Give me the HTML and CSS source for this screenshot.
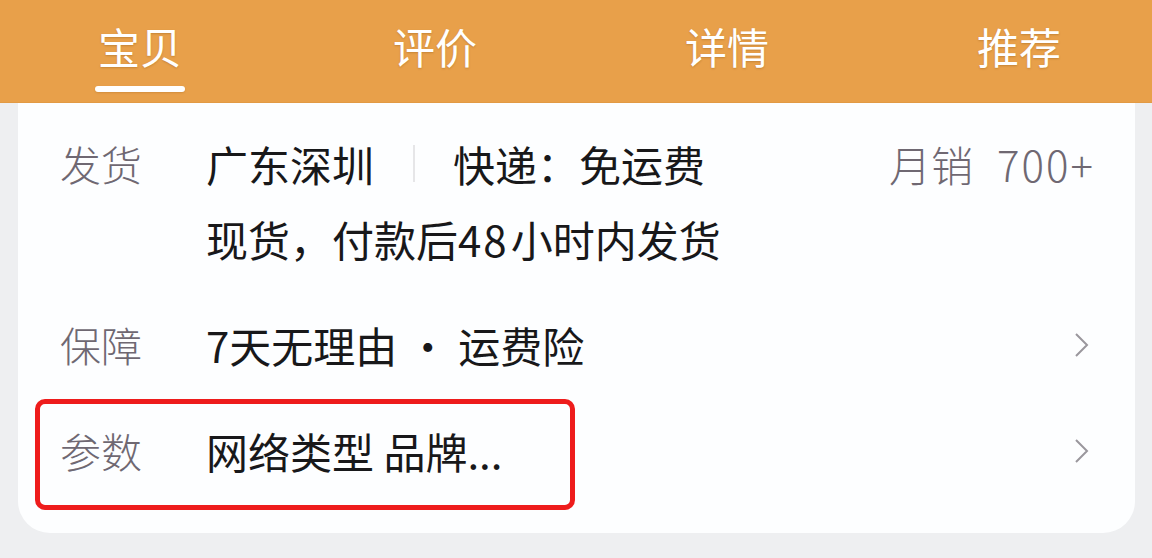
FILE: index.html
```html
<!DOCTYPE html>
<html lang="zh-CN">
<head>
<meta charset="utf-8">
<link rel="stylesheet" href="styles.css">
</head>
<body>
<div class="page">
  <nav class="tabs">
    <div class="tab active"><span class="tab-text">宝贝</span><span class="tab-line"></span></div>
    <div class="tab"><span class="tab-text">评价</span></div>
    <div class="tab"><span class="tab-text">详情</span></div>
    <div class="tab"><span class="tab-text">推荐</span></div>
  </nav>
  <section class="card">
    <div class="row">
      <div class="label">发货</div>
      <div class="value">
        <div class="line">
          <span>广东深圳</span><span class="sep"></span><span>快递：免运费</span>
          <span class="sales"><span>月销</span><span class="sales-num">700+</span></span>
        </div>
        <div class="line">现货，付款后<span class="num">48</span>小时内发货</div>
      </div>
    </div>
    <div class="row">
      <div class="label">保障</div>
      <div class="value"><div class="line">7天无理由 · 运费险</div></div>
      <svg class="chev" viewBox="0 0 16 26" width="16" height="26"><path d="M2 2 L13 13 L2 24" fill="none" stroke="#9a979d" stroke-width="2"/></svg>
    </div>
    <div class="row highlight">
      <div class="label">参数</div>
      <div class="value"><div class="line">网络类型 品牌...</div></div>
      <svg class="chev" viewBox="0 0 16 26" width="16" height="26"><path d="M2 2 L13 13 L2 24" fill="none" stroke="#9a979d" stroke-width="2"/></svg>
      <span class="mark"></span>
    </div>
  </section>
</div>
</body>
</html>
```
FILE: styles.css
```css
html, body {
  margin: 0;
  padding: 0;
}
body {
  width: 1152px;
  height: 558px;
  overflow: hidden;
  background: #eeeff1;
  font-family: "Noto Sans CJK SC", "Noto Sans", sans-serif;
}
.page {
  display: flex;
  flex-direction: column;
  height: 558px;
}
.tabs {
  height: 102px;
  background: #e8a04a;
  border-bottom: 1px solid #e29a44;
  display: flex;
  justify-content: space-between;
  align-items: flex-start;
  padding: 0 91px 0 95px;
}
.tab {
  display: flex;
  flex-direction: column;
  align-items: center;
  padding-top: 18px;
}
.tab-text {
  font-size: 42px;
  line-height: 56px;
  font-weight: 400;
  color: #ffffff;
  text-shadow: 0 1px 2px rgba(120, 70, 10, 0.3);
}
.tab-line {
  display: block;
  width: 90px;
  height: 6px;
  margin-top: 12px;
  border-radius: 3px;
  background: #ffffff;
  box-shadow: 0 1px 2px rgba(120, 70, 10, 0.2);
}
.card {
  margin: 0 17px 0 18px;
  background: #fdfeff;
  border-radius: 0 0 32px 32px;
  padding: 23px 42px 45px 42px;
  display: flex;
  flex-direction: column;
  gap: 31px;
}
.row {
  position: relative;
  display: flex;
  align-items: flex-start;
}
.label {
  width: 146px;
  flex: none;
  font-size: 41px;
  line-height: 75px;
  font-weight: 300;
  color: #6f6872;
}
.value {
  flex: 1;
  font-size: 42px;
  line-height: 75px;
  color: #18181a;
}
.line {
  display: flex;
  align-items: center;
  height: 75px;
  white-space: nowrap;
}
.num {
  letter-spacing: 2px;
  margin-right: 2px;
}
.sep {
  width: 2px;
  height: 37px;
  background: #e6e6e8;
  margin: 0 38px 0 39px;
}
.sales {
  margin-left: auto;
  display: flex;
  color: #6f6872;
  font-weight: 300;
}
.sales-num {
  margin-left: 24px;
  letter-spacing: 2px;
  margin-right: -2px;
}
.chev {
  flex: none;
  align-self: center;
  margin-right: 3px;
}
.mark {
  position: absolute;
  left: -25px;
  top: -14px;
  width: 530px;
  height: 101px;
  border: 5px solid #ee1c1c;
  border-radius: 10px;
}
```
